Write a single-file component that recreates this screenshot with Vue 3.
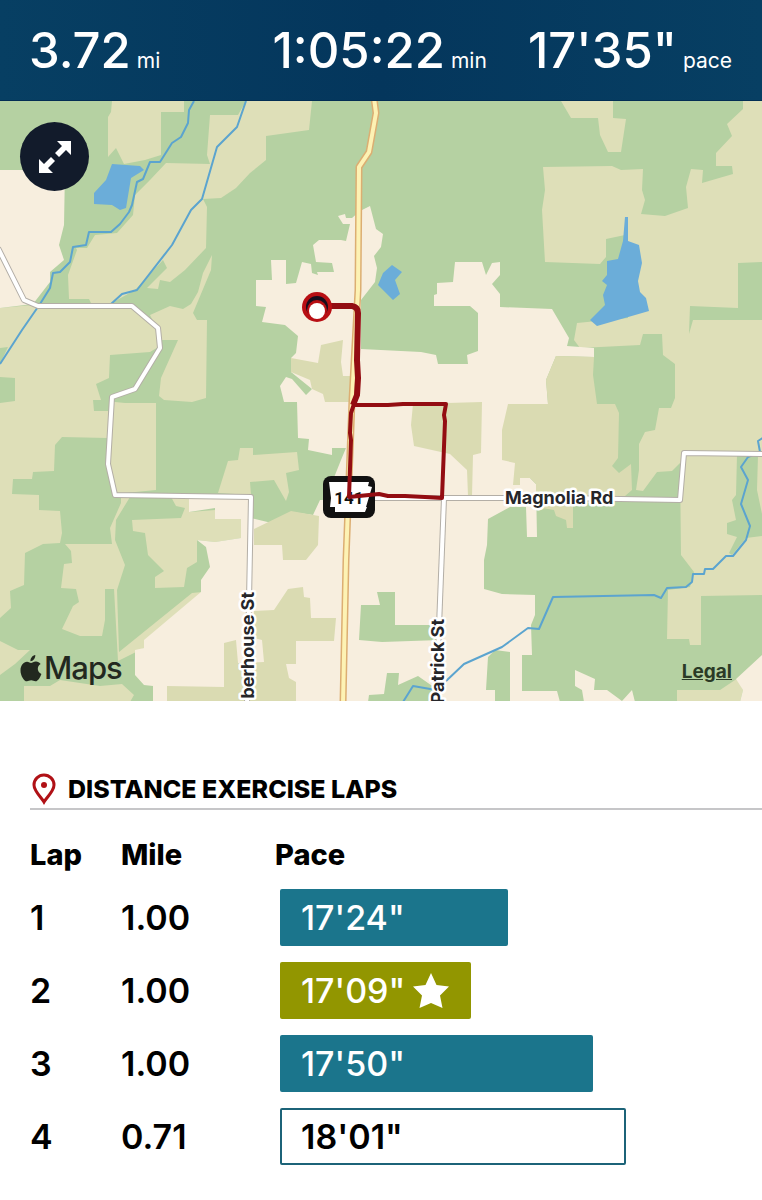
<script setup>
import { ref, computed } from 'vue';

const distance = ref('3.72');
const duration = ref('1:05:22');
const pace = ref('17\'35"');

const stats = computed(() => [
  { value: distance.value, unit: 'mi' },
  { value: duration.value, unit: 'min' },
  { value: pace.value, unit: 'pace' },
]);

const laps = ref([
  { lap: 1, mile: '1.00', pace: '17\'24"', width: 47.3, type: 'full' },
  { lap: 2, mile: '1.00', pace: '17\'09"', width: 39.6, type: 'best' },
  { lap: 3, mile: '1.00', pace: '17\'50"', width: 64.9, type: 'full' },
  { lap: 4, mile: '0.71', pace: '18\'01"', width: 71.7, type: 'partial' },
]);

// Map shapes
const fields = [
  '112,101 184,101 184,112 161,112 161,155 145,160 124,164 116,148 108,157 108,117 111,112',
  '210,115 238,115 246,101 312,101 309,130 266,136 266,160 250,173 236,188 221,198 203,199 207,207 206,248 185,270 170,282 160,280 158,289 147,288 167,268 163,260 135,290 110,304 91,303 89,299 69,299 68,275 77,250 76,248 87,248 95,235 117,233 133,215 135,195 150,180 166,163 210,164 207,155',
  '0,308 32,305 132,306 158,328 160,346 150,352 110,355 109,378 96,384 101,400 93,400 94,411 108,411 108,438 62,437 55,445 54,471 33,472 32,479 13,479 12,494 39,495 39,510 60,511 62,533 60,543 43,544 25,553 24,585 10,591 11,608 0,618',
  '150,315 170,306 183,309 191,304 198,292 203,273 212,255 211,270 193,313 197,320 207,320 206,398 192,402 164,400 159,396 161,378 178,340 162,340',
  '115,402 125,403 156,403 156,490 115,494 108,465 110,402',
  '65,544 112,544 110,528 121,503 121,497 130,497 116,520 115,540 125,565 117,590 119,652 192,593 202,592 144,648 118,661 114,589 105,589 105,620 102,636 80,636 62,629 73,606 79,602 76,589 61,588 64,564 72,563 71,551',
  '0,641 18,650 30,650 15,664 0,675',
  '24,686 50,686 60,680 100,686 122,684 134,695 130,702 24,702',
  '132,520 181,518 185,508 176,506 171,497 190,497 190,512 215,510 241,519 241,538 215,542 197,540 197,562 187,568 184,587 155,588 155,577 164,571 148,555 145,533 133,531',
  '218,493 228,461 238,460 240,448 253,448 253,455 297,452 299,470 286,473 289,492 286,501 274,480 250,482 251,495',
  '743,101 762,101 762,595 701,596 701,645 690,645 689,639 667,639 668,590 690,587 694,572 681,555 680,463 672,471 657,472 643,491 636,490 639,470 639,444 645,432 655,430 659,408 671,408 675,398 675,364 663,355 662,334 643,334 640,345 580,348 574,340 577,323 628,318 625,235 606,239 606,257 600,264 545,262 542,210 545,190 543,167 612,166 621,170 643,169 642,190 645,200 641,214 665,216 688,208 686,187 691,169 703,170 702,183 733,174 732,166 716,166 716,153 732,136 727,124 743,109',
  '561,101 613,101 613,118 626,119 621,152 608,152 600,135 598,118 571,118',
  '677,690 720,690 738,678 743,690 740,702 677,702',
];

const towns = [
  '0,170 65,170 64,225 59,245 64,260 50,272 50,282 33,304 0,308',
  '189,497 251,497 251,518 280,525 292,512 313,515 320,500 325,500 341,460 346,448 332,448 332,455 308,450 309,439 298,438 297,402 284,402 280,386 286,377 292,379 306,395 312,389 291,372 291,358 296,353 298,336 285,325 262,322 266,307 256,306 256,280 272,280 271,260 286,260 286,284 296,283 302,262 311,264 312,273 318,275 317,272 334,272 332,263 316,262 313,245 319,240 341,240 346,241 350,224 343,224 338,216 345,214 346,218 352,218 360,211 370,206 376,229 383,234 381,247 374,256 377,268 375,282 361,300 361,349 421,352 436,355 438,364 468,364 467,355 478,351 478,313 470,306 434,306 434,295 437,294 437,283 453,282 455,262 482,262 486,275 492,263 500,262 500,275 492,284 500,294 500,307 552,309 569,338 567,346 594,348 594,357 556,356 546,380 548,404 520,404 520,478 530,478 536,484 537,537 527,537 526,507 510,507 488,519 487,545 484,560 484,589 502,594 535,595 535,615 531,625 532,655 522,655 522,691 557,691 560,702 153,702 153,686 144,685 135,675 135,650 144,648 144,640 201,592 201,580 210,567 206,547 197,540 215,542 241,538 241,519 215,519 215,508 189,512',
  '575,670 595,679 594,690 607,690 622,701 632,690 635,702 584,702 582,690 575,686',
  '736,679 762,655 762,702 740,702 743,690',
];

const crops = [
  '291,358 318,363 321,345 343,340 341,362 343,376 350,376 350,402 325,402 323,394 312,389 310,380 291,372',
  '254,529 291,511 319,516 318,545 306,560 283,560 282,545 254,545',
  '254,611 274,610 288,589 303,587 304,597 310,598 311,618 336,618 334,641 296,641 296,664 286,664 289,678 296,682 296,702 167,702 167,686 224,687 224,643 236,640 238,663 264,662 262,640 254,638',
  '413,404 482,402 481,453 473,455 472,496 468,496 467,470 450,454 414,446 411,425',
  '508,404 548,404 546,380 556,356 594,357 593,375 597,404 615,404 619,413 618,458 612,466 619,473 631,464 632,490 625,496 573,506 573,528 567,528 566,520 556,516 554,510 536,507 536,484 530,478 520,478 520,485 513,485 515,463 502,460 502,430',
];

const woods = [
  '0,348 8,347 0,364',
  '0,377 15,378 15,401 0,403',
  '690,306 738,308 738,263 762,262 762,320 693,320 689,334',
  '737,455 758,455 757,490 762,514 762,536 746,538 732,555 729,553 737,537 727,534 727,523 736,520 732,500 736,495',
  '377,592 395,592 395,625 431,625 440,640 382,642 359,640 361,605 380,605',
  '387,673 399,673 398,685 418,676 438,690 438,702 368,702 369,695 384,694',
  '486,690 488,657 495,650 510,652 510,702 495,702 495,690',
];

const lakes = [
  '112,164 140,166 144,170 131,178 126,208 120,210 112,205 94,204 94,193 106,180',
  '392,265 402,272 395,280 400,294 393,300 378,285 383,273',
  '625,217 628,217 628,241 639,245 642,263 638,281 640,292 646,298 649,311 597,326 590,320 605,305 603,295 607,285 602,281 607,275 607,261 618,259 623,241',
];

const rivers = [
  '194,101 189,110 188,123 181,137 172,143 160,162 150,162 143,179 137,182 132,205 129,212 120,224 111,232 89,232 86,245 73,247 70,262 60,272 53,273 50,288 40,304 22,330 0,364',
  '246,101 237,127 217,147 202,199 191,210 172,245 137,290 122,294 111,304',
  '764,437 758,441 760,452 748,457 741,467 748,480 741,504 750,526 746,540 733,556 726,556 713,569 705,569 704,574 693,574 692,582 686,587 667,588 661,598 654,595 553,597 539,629 528,628 502,647 464,664 445,682 436,690 413,686 403,702',
];

const roads = [
  '-2,248 24,300 38,306 132,306 158,328 160,348 135,389 112,397 108,464 115,495 251,497 247,704',
  '350,498 442,498 560,498 680,500 684,453 764,454',
  '444,498 436,704',
];

const highway = '374,98 376,113 369,152 359,167 358,290 352,400 346,560 343,704';
</script>

<template>
  <main class="workout">
    <!-- Totals -->
    <header class="stats">
      <div
        v-for="stat in stats"
        :key="stat.unit"
        class="stat"
      >
        <span class="value">{{ stat.value }}</span>
        <span class="unit">{{ stat.unit }}</span>
      </div>
    </header>

    <!-- Route map -->
    <section class="map">
      <svg
        class="map-canvas"
        viewBox="0 101 762 600"
        role="img"
        aria-label="Route map"
      >
        <rect class="wood" y="101" width="762" height="600" />
        <polygon v-for="p in fields" :key="p" class="field" :points="p" />
        <polygon v-for="p in towns" :key="p" class="town" :points="p" />
        <polygon v-for="p in crops" :key="p" class="crop" :points="p" />
        <polygon v-for="p in woods" :key="p" class="wood" :points="p" />
        <polygon v-for="p in lakes" :key="p" class="lake" :points="p" />
        <polyline v-for="p in rivers" :key="p" class="river" :points="p" />
        <polyline v-for="p in roads" :key="p" class="road-edge" :points="p" />
        <polyline v-for="p in roads" :key="p" class="road" :points="p" />
        <polyline class="highway-edge" :points="highway" />
        <polyline class="highway" :points="highway" />

        <text class="street" x="505" y="504">Magnolia Rd</text>
        <text class="street" text-anchor="end" transform="translate(254 592) rotate(-90)">berhouse St</text>
        <text class="street" text-anchor="end" transform="translate(444 619) rotate(-90)">Patrick St</text>

        <!-- Highway shield -->
        <rect class="shield" x="323" y="476" width="52" height="42" rx="8" />
        <path class="shield-plate" d="M329 482H369L368 486L372 487L366 507H367L365 512H335V507H330L331 498Z" />
        <text class="shield-text" x="349" y="504" text-anchor="middle">141</text>

        <!-- Route -->
        <path class="route wide" d="M326 306L352 306Q358 307 358 313L357 360L358 378L357 395L353 405" />
        <path class="route" d="M353 405L388 405L403 404L446 404L444 415L445 421L442 498L425 497L405 496L388 496L379 494L349 497L351 440L350 433L351 413L354 404" />
        <circle class="pin-ring" cx="317" cy="307" r="15" />
        <circle class="pin-hole" cx="317" cy="307" r="11" />
        <circle class="pin-ring" cx="317" cy="310" r="10" />
        <circle class="pin-dot" cx="317" cy="311" r="8" />
      </svg>

      <button class="expand" type="button" aria-label="Expand map">
        <svg viewBox="0 0 34 34" width="34" height="34">
          <path d="M33 1V15L28 10L21 17L17 13L24 6L19 1Z" />
          <path d="M1 33V19L6 24L13 17L17 21L10 28L15 33Z" />
        </svg>
      </button>

      <div class="maps-logo">
        <svg viewBox="0 0 22 27" width="22" height="27">
          <path d="M15.3 0C15.5 3.200 13.300 6.200 10.400 6.200C10.200 3.300 12.500 .4 15.300 0Z" />
          <path d="M11 8C12.200 8 13.800 6.500 16 6.600C17.900 6.700 19.500 7.500 20.600 9C16.500 11.500 17.100 17 21.400 18.900C20.500 21.500 18.100 26.300 15.500 26.300C13.800 26.300 13.100 25.300 11.200 25.300C9.300 25.300 8.500 26.300 7 26.300C3.900 26.300 .5 20.500 .5 15.400C.5 10.200 3.600 6.700 7 6.700C8.800 6.700 10.100 8 11 8Z" />
        </svg>
        <span>Maps</span>
      </div>
      <a class="legal" href="#">Legal</a>
    </section>

    <!-- Laps -->
    <section class="laps">
      <h2 class="title">
        <svg viewBox="0 0 26 32" width="28" height="32">
          <path class="pin-outline" d="M13 29C10 24 3 18 3 12A10 10 0 0 1 23 12C23 18 16 24 13 29Z" />
          <circle class="pin-center" cx="13" cy="12" r="3" />
        </svg>
        <span>DISTANCE EXERCISE LAPS</span>
      </h2>

      <table class="lap-table">
        <thead>
          <tr>
            <th class="col-lap" scope="col">Lap</th>
            <th class="col-mile" scope="col">Mile</th>
            <th scope="col">Pace</th>
          </tr>
        </thead>
        <tbody>
          <tr
            v-for="item in laps"
            :key="item.lap"
          >
            <td>{{ item.lap }}</td>
            <td>{{ item.mile }}</td>
            <td class="bar-cell">
              <div
                class="bar"
                :class="item.type"
                :style="{ width: item.width + '%' }"
              >
                <span>{{ item.pace }}</span>
                <svg
                  v-if="item.type === 'best'"
                  viewBox="0 0 40 38"
                  width="40"
                  height="38"
                >
                  <path d="M20 1L25.500 13L38 14.500L29 23.500L31.500 36L20 31L8.500 36L11 23.500L2 14.500L14.500 13Z" />
                </svg>
              </div>
            </td>
          </tr>
        </tbody>
      </table>
    </section>
  </main>
</template>

<style>
body {
  margin: 0;
  background: #fff;
}
</style>

<style scoped>
* {
  box-sizing: border-box;
}

.workout {
  font-family: Inter, 'Liberation Sans', sans-serif;
  color: #000;
  overflow: hidden;
}

.stats {
  display: grid;
  grid-template-columns: 245fr 257fr 200fr;
  align-items: center;
  height: 101px;
  padding: 2px 30px 0 29px;
  color: #fff;
  background: linear-gradient(90deg, #073f63, #04365c 50%, #073f63);
  border-bottom: 1px solid #032e54;
}

.stat {
  display: flex;
  align-items: baseline;
  gap: 6px;
  white-space: nowrap;
}

.value {
  font-size: 49px;
  line-height: 60px;
  font-weight: 500;
}

.unit {
  font-size: 21px;
}

.map {
  position: relative;
}

.map-canvas {
  display: block;
  width: 100%;
}

.wood {
  fill: #b5d1a2;
}

.field {
  fill: #dedfb8;
}

.town {
  fill: #f7eede;
}

.crop {
  fill: #dadbb2;
}

.lake {
  fill: #6badd9;
}

.river,
.road,
.road-edge,
.highway,
.highway-edge,
.route {
  fill: none;
  stroke-linejoin: round;
}

.river {
  stroke: #5ba4cf;
  stroke-width: 2;
}

.road-edge {
  stroke: #b3aea6;
  stroke-width: 6;
}

.road {
  stroke: #fff;
  stroke-width: 4;
}

.highway-edge {
  stroke: #dcae72;
  stroke-width: 7;
}

.highway {
  stroke: #fdf2b4;
  stroke-width: 4;
}

.street {
  font-size: 18px;
  font-weight: 700;
  fill: #26262a;
  stroke: #fff;
  stroke-width: 5px;
  stroke-linejoin: round;
  paint-order: stroke;
}

.shield {
  fill: #111;
}

.shield-plate {
  fill: #fff;
}

.shield-text {
  font-family: 'Liberation Sans Narrow', Roboto, sans-serif;
  font-size: 17px;
  font-weight: 700;
  fill: #111;
}

.route {
  stroke: #930d12;
  stroke-width: 4;
}

.route.wide {
  stroke-width: 6;
}

.pin-ring {
  fill: #b80f14;
}

.pin-hole {
  fill: #170d1d;
}

.pin-dot {
  fill: #fff;
}

.expand {
  position: absolute;
  top: 21px;
  left: 20px;
  display: flex;
  align-items: center;
  justify-content: center;
  width: 69px;
  height: 69px;
  padding: 0;
  border: 0;
  border-radius: 50%;
  background: #121b2b;
  fill: #fff;
}

.maps-logo {
  position: absolute;
  left: 20px;
  bottom: 16px;
  display: flex;
  align-items: center;
  gap: 2px;
  font-size: 31px;
  line-height: 34px;
  font-weight: 500;
  letter-spacing: -1px;
  color: #22281f;
  fill: #22281f;
}

.legal {
  position: absolute;
  right: 30px;
  bottom: 17px;
  font-size: 19px;
  line-height: 24px;
  font-weight: 700;
  color: #2b3a26;
}

.laps {
  padding: 69px 0 28px 30px;
}

.title {
  display: flex;
  align-items: center;
  gap: 10px;
  height: 40px;
  margin: 0;
  border-bottom: 2px solid #c6c6c8;
  font-size: 25px;
  font-weight: 800;
  white-space: nowrap;
}

.pin-outline {
  fill: none;
  stroke: #b01116;
  stroke-width: 3;
}

.pin-center {
  fill: #b01116;
}

.lap-table {
  width: 100%;
  margin-top: 7px;
  border-collapse: collapse;
  table-layout: fixed;
  text-align: left;
}

th {
  height: 64px;
  padding: 10px 0 0;
  font-size: 29px;
  font-weight: 800;
}

.col-lap {
  width: 91px;
}

.col-mile {
  width: 154px;
}

td {
  height: 73px;
  padding: 0;
  font-size: 34px;
  line-height: 40px;
  font-weight: 600;
}

.bar-cell {
  padding: 0 0 0 5px;
}

.bar {
  display: flex;
  align-items: center;
  gap: 6px;
  height: 57px;
  padding-left: 21px;
  border-radius: 2px;
  font-weight: 500;
  color: #fff;
  white-space: nowrap;
}

.bar svg {
  flex: none;
  fill: #fff;
}

.full {
  background: #1b758c;
}

.best {
  background: #929600;
}

.partial {
  padding-left: 19px;
  border: 2px solid #1c6378;
  font-weight: 600;
  color: #000;
}
</style>
